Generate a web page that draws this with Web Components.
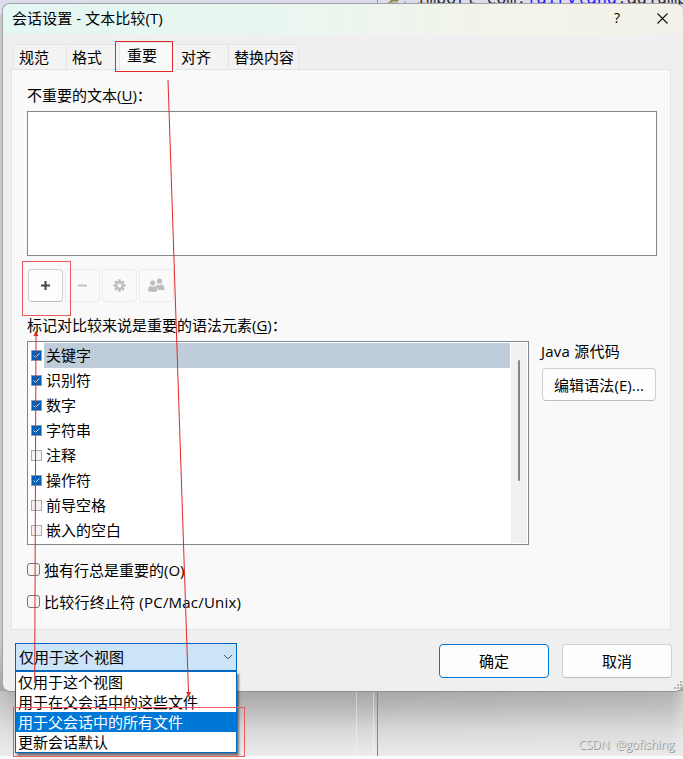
<!DOCTYPE html>
<html lang="zh-CN">
<head>
<meta charset="utf-8">
<title>会话设置</title>
<style>
    html, body {
        margin: 0;
        width: 683px;
        height: 759px;
        overflow: hidden;
        background: #fff;
        font: 15px/20px "Open Sans", "Noto Sans CJK SC", sans-serif;
        color: #000;
    }
</style>
</head>
<body>
<app-desktop>
    <session-dialog>
        <title-bar slot="title">会话设置 - 文本比较(T)</title-bar>
        <tab-strip slot="tabs"></tab-strip>
        <tab-panel slot="panel"></tab-panel>
        <combo-box slot="footer"></combo-box>
        <push-button slot="footer" primary style="--w: 110px; --h: 34px">确定</push-button>
        <push-button slot="footer" style="--w: 110px; --h: 34px">取消</push-button>
    </session-dialog>
</app-desktop>
<red-marks></red-marks>

<script>
// Small base class: renders the static markup of each element
class BaseElement extends HTMLElement {
    constructor() {
        super();
        this.attachShadow({ mode: 'open' });
        this.shadowRoot.innerHTML = this.render();
    }
}

class AppDesktop extends BaseElement {
    render() {
        return `
            <style>
                :host {
                    display: block;
                    position: relative;
                    width: 683px;
                    height: 756px;
                    overflow: hidden;
                    background:
                        linear-gradient(90deg, rgba(235, 235, 235, 0.4), transparent 24px, transparent 350px, rgba(235, 235, 235, 0.15) 670px, rgba(235, 235, 235, 0.5)) 0 691px no-repeat,
                        linear-gradient(#dddcec 0, #dddcec 14px, #c9c9c9 15px, #c9c9c9 640px, #a5a5a5 690px, #b9b9b9 708px, #d8d8d8 730px, #ececec 756px);
                }
                .code {
                    position: absolute;
                    left: 377px;
                    top: 0;
                    width: 305px;
                    height: 20px;
                    border-left: 1px solid #999;
                    font: 17px/20px "DejaVu Sans Mono", monospace;
                    color: #333;
                    white-space: pre;
                }
                .code span {
                    display: block;
                    margin: -12px 0 0 38px;
                    letter-spacing: -0.2px;
                }
                .code b { font-weight: normal; color: #22f; }
                .code svg { position: absolute; left: 4px; top: 0; }
                .splitter {
                    position: absolute;
                    left: 356px;
                    top: 691px;
                    width: 18px;
                    height: 65px;
                    box-sizing: border-box;
                    border: solid rgba(255, 255, 255, 0.4);
                    border-width: 0 1px;
                }
                .splitter::after {
                    content: "";
                    position: absolute;
                    left: 20px;
                    top: 0;
                    width: 1px;
                    height: 65px;
                    background: #858585;
                }
                .watermark {
                    position: absolute;
                    right: 9px;
                    bottom: 1px;
                    font-size: 12px;
                    letter-spacing: -0.25px;
                    color: #e2e2e2;
                    text-shadow: 1px 1px 0 #999;
                    white-space: pre;
                }
            </style>
            <div class="code"><svg width="24" height="4"><path d="M5 4 10 0h6v1H9l1 2h6v1z" fill="#d5b83a" stroke="#665520" stroke-width=".6"/><path d="M22 2h4" stroke="#888"/></svg><span>import com.<b>fairyland</b>.adjump</span></div>
            <div class="splitter"></div>
            <slot></slot>
            <div class="watermark">CSDN  @gofishing</div>
        `;
    }
}

class SessionDialog extends BaseElement {
    render() {
        return `
            <style>
                :host {
                    display: flex;
                    flex-direction: column;
                    position: relative;
                    box-sizing: border-box;
                    width: 681px;
                    height: 689px;
                    margin: 3px 0 0 2px;
                    border: 1px solid #a3a3a3;
                    border-bottom-color: #8d9390;
                    border-right: 0;
                    border-radius: 8px;
                    background: #efefef;
                    overflow: hidden;
                }
                .tabs { padding: 8px 0 0 10px; height: 27px; }
                .panel { padding: 0 12px 0 8px; height: 561px; }
                .footer {
                    display: flex;
                    align-items: flex-start;
                    padding: 13px 11px 0 12px;
                    gap: 13px;
                }
                slot[name=footer]::slotted(combo-box) { margin-right: auto; }
                slot[name=footer]::slotted(push-button) { margin-top: 1px; }
                .grip { position: absolute; right: 0; bottom: 1px; }
            </style>
            <slot name="title"></slot>
            <div class="tabs"><slot name="tabs"></slot></div>
            <div class="panel"><slot name="panel"></slot></div>
            <div class="footer"><slot name="footer"></slot></div>
            <svg class="grip" width="9" height="9" fill="#b5b5b5"><path d="M6 0h2v2h-2zM3 3h2v2h-2zM6 3h2v2h-2zM0 6h2v2h-2zM3 6h2v2h-2zM6 6h2v2h-2z"/></svg>
        `;
    }
}

class TitleBar extends BaseElement {
    render() {
        return `
            <style>
                :host {
                    display: flex;
                    align-items: center;
                    box-sizing: border-box;
                    height: 30px;
                    padding: 0 15px 2px 9px;
                    background: linear-gradient(90deg, #e4f7f3, #eaf6ef 45%, #f3f3e9 75%, #f3f2ea);
                }
                .text { flex: 1; white-space: pre; letter-spacing: 0.07px; }
                .help { font-size: 14px; width: 10px; margin-right: 35px; text-align: center; }
            </style>
            <span class="text"><slot></slot></span>
            <span class="help">?</span>
            <svg width="11" height="11" stroke="#111" stroke-width="1.1"><path d="M.5.5l10 10M10.500.5l-10 10"/></svg>
        `;
    }
}

class TabStrip extends BaseElement {
    render() {
        return `
            <style>
                :host { display: flex; align-items: flex-end; height: 27px; }
                .tab {
                    box-sizing: border-box;
                    height: 25px;
                    padding-left: 5px;
                    border: 1px solid #e5e5e5;
                    border-bottom: 0;
                    border-right: 0;
                    background: #f3f3f3;
                    line-height: 24px;
                    white-space: nowrap;
                }
                .tab:last-child { border-right: 1px solid #e5e5e5; }
                .active {
                    height: 28px;
                    margin-bottom: -1px;
                    padding-left: 7px;
                    background: #f9f9f9;
                    z-index: 1;
                    line-height: 25px;
                }
            </style>
            <div class="tab" style="width: 53px">规范</div>
            <div class="tab" style="width: 53px">格式</div>
            <div class="tab active" style="width: 57px">重要</div>
            <div class="tab" style="width: 52px; border-left: 0">对齐</div>
            <div class="tab" style="width: 71px">替换内容</div>
        `;
    }
}

class PushButton extends BaseElement {
    render() {
        return `
            <style>
                :host {
                    display: flex;
                    align-items: center;
                    justify-content: center;
                    box-sizing: border-box;
                    width: var(--w, 35px);
                    height: var(--h, 33px);
                    border: 1px solid #d0d0d0;
                    border-bottom-color: #bdbdbd;
                    border-radius: 4px;
                    background: #fdfdfd;
                    white-space: nowrap;
                }
                :host([primary]) { border-color: #0078d4; }
                :host([disabled]) { border-color: #ebebeb; background: #fafafa; }
            </style>
            <slot></slot>
        `;
    }
}

class CheckItem extends BaseElement {
    render() {
        return `
            <style>
                :host { display: flex; align-items: center; height: 25px; padding-left: 2px; }
                .box {
                    box-sizing: border-box;
                    width: 11px;
                    height: 11px;
                    border: 1px solid #aaa;
                    background: #f3f3f3;
                }
                .box svg { display: none; }
                :host([checked]) .box { background: #005fb8; border-color: #8c9db0; }
                :host([checked]) .box svg { display: block; }
                .label { flex: 1; margin-left: 2px; padding-left: 2px; line-height: 25px; }
                :host([selected]) .label { background: #bfcddb; }
            </style>
            <span class="box"><svg width="9" height="9" fill="none" stroke="#cfe2f4"><path d="M1.500 4.500l2 2 4-4"/></svg></span>
            <span class="label"><slot></slot></span>
        `;
    }
}

class CheckList extends BaseElement {
    render() {
        return `
            <style>
                :host {
                    display: flex;
                    box-sizing: border-box;
                    width: 502px;
                    height: 204px;
                    padding: 1px;
                    border: 1px solid #828790;
                    background: #fff;
                }
                .items { flex: 1; margin-right: 1px; }
                .scroll { width: 16px; background: #f0f0f0; }
                .thumb { width: 2px; height: 121px; margin: 17px 0 0 7px; background: #858585; border-radius: 1px; }
            </style>
            <div class="items"><slot></slot></div>
            <div class="scroll"><div class="thumb"></div></div>
        `;
    }
}

class OptionCheck extends BaseElement {
    render() {
        return `
            <style>
                :host { display: flex; align-items: center; height: 32px; gap: 4px; }
                .box {
                    box-sizing: border-box;
                    width: 13px;
                    height: 13px;
                    margin-top: -2px;
                    border: 1px solid #777;
                    border-radius: 3px;
                    background: #f6f6f6;
                }
                .text { letter-spacing: var(--spacing, 0); }
            </style>
            <span class="box"></span><span class="text"><slot></slot></span>
        `;
    }
}

class TabPanel extends BaseElement {
    render() {
        return `
            <style>
                :host {
                    display: block;
                    box-sizing: border-box;
                    height: 561px;
                    padding: 15px 13px 0 15px;
                    border: 1px solid #e3e3e3;
                    background: #f9f9f9;
                }
                .label { height: 20px; white-space: nowrap; }
                u { text-underline-offset: 2px; text-decoration-thickness: 1px; }
                .text { box-sizing: border-box; width: 630px; height: 145px; margin-top: 6px; border: 1px solid #828790; background: #fff; }
                .tools { display: flex; gap: 2px; margin: 13px 0 13px 1px; }
                .row { display: flex; gap: 12px; margin-top: 6px; }
                .side push-button { margin: 7px 0 0 1px; letter-spacing: 0.1px; }
                .options { margin-top: 9px; }
            </style>
            <div class="label">不重要的文本(<u>U</u>)：</div>
            <div class="text"></div>
            <div class="tools">
                <push-button><svg width="9" height="9" fill="#444"><path d="M3.500 0h2v3.500H9v2H5.500V9h-2V5.500H0v-2h3.500z"/></svg></push-button>
                <push-button disabled><svg width="9" height="9" fill="#c3c3c3"><path d="M0 3.500h9v2H0z"/></svg></push-button>
                <push-button disabled><svg width="13" height="13" fill="none" stroke="#bdbdbd"><circle cx="6.500" cy="6.500" r="3.200" stroke-width="2.400"/><path stroke-width="2.500" d="M6.500.3v2.500M6.500 10.200v2.500M.3 6.500h2.500M10.200 6.500h2.500M2.100 2.100l1.800 1.800M9.100 9.100l1.800 1.800M2.100 10.900l1.800-1.800M9.100 3.900l1.800-1.800"/></svg></push-button>
                <push-button disabled><svg width="17" height="15" fill="#bdbdbd"><circle cx="11.500" cy="3.200" r="2.600"/><path d="M9 6.500q2.500 1.500 5 0 2.500.7 2.500 5.500h-6q-.5-2-2.500-3z"/><circle cx="4.700" cy="5" r="2.800" stroke="#fafafa" stroke-width=".5"/><path d="M2 8q2.700 1.500 5.400 0 2 1 2 5-4.700 2-9.400 0 0-4 2-5z"/></svg></push-button>
            </div>
            <div class="label">标记对比较来说是重要的语法元素(<u>G</u>)：</div>
            <div class="row">
                <check-list>
                    <check-item checked selected>关键字</check-item>
                    <check-item checked>识别符</check-item>
                    <check-item checked>数字</check-item>
                    <check-item checked>字符串</check-item>
                    <check-item>注释</check-item>
                    <check-item checked>操作符</check-item>
                    <check-item>前导空格</check-item>
                    <check-item>嵌入的空白</check-item>
                </check-list>
                <div class="side">
                    <div class="label" style="letter-spacing: 0.25px">Java 源代码</div>
                    <push-button style="--w: 114px">编辑语法(E)...</push-button>
                </div>
            </div>
            <div class="options">
                <option-check>独有行总是重要的(O)</option-check>
                <option-check style="--spacing: 0.21px">比较行终止符 (PC/Mac/Unix)</option-check>
            </div>
        `;
    }
}

class ComboBox extends BaseElement {
    render() {
        return `
            <style>
                :host {
                    display: flex;
                    align-items: center;
                    justify-content: space-between;
                    box-sizing: border-box;
                    width: 222px;
                    height: 28px;
                    padding: 0 3px;
                    border: 1px solid #0067c0;
                    background: #cce4f7;
                }
            </style>
            <span>仅用于这个视图</span>
            <svg width="10" height="6" fill="none" stroke="#555"><path d="M.8.8l4.200 4 4.200-4"/></svg>
        `;
    }
}

class ComboMenu extends BaseElement {
    render() {
        return `
            <style>
                :host {
                    display: block;
                    position: absolute;
                    left: 15px;
                    top: 671px;
                    box-sizing: border-box;
                    width: 222px;
                    height: 82px;
                    border: 1px solid #0067c0;
                    background: #fff;
                    box-shadow: 2px 3px 2px rgba(0, 0, 0, 0.5);
                }
                div { height: 20px; padding-left: 2px; line-height: 20px; }
                .hot { background: #0078d7; color: #fff; }
            </style>
            <div>仅用于这个视图</div>
            <div>用于在父会话中的这些文件</div>
            <div class="hot">用于父会话中的所有文件</div>
            <div>更新会话默认</div>
        `;
    }
}

// Popup list plus the red frames and arrows drawn over the dialog
class RedMarks extends BaseElement {
    render() {
        return `
            <style>
                :host { position: absolute; z-index: 2; left: 0; top: 0; width: 683px; height: 759px; }
                svg { position: absolute; left: 0; top: 0; }
            </style>
            <combo-menu></combo-menu>
            <svg width="683" height="759" fill="none" stroke="#e32828">
                <rect x="115.500" y="41.500" width="57" height="30"/>
                <g stroke="#ee5a5a">
                    <rect x="22.500" y="261.500" width="48" height="54"/>
                    <rect x="13.500" y="707.500" width="231" height="49"/>
                </g>
                <path d="M168 80L188.500 693M34.700 683L36 335"/>
                <path d="M186 692h5l-2.300 5zM33.500 336h5L36 331z" fill="#e32828" stroke="none"/>
            </svg>
        `;
    }
}

customElements.define('app-desktop', AppDesktop);
customElements.define('session-dialog', SessionDialog);
customElements.define('title-bar', TitleBar);
customElements.define('tab-strip', TabStrip);
customElements.define('tab-panel', TabPanel);
customElements.define('push-button', PushButton);
customElements.define('check-item', CheckItem);
customElements.define('check-list', CheckList);
customElements.define('option-check', OptionCheck);
customElements.define('combo-box', ComboBox);
customElements.define('combo-menu', ComboMenu);
customElements.define('red-marks', RedMarks);
</script>
</body>
</html>
